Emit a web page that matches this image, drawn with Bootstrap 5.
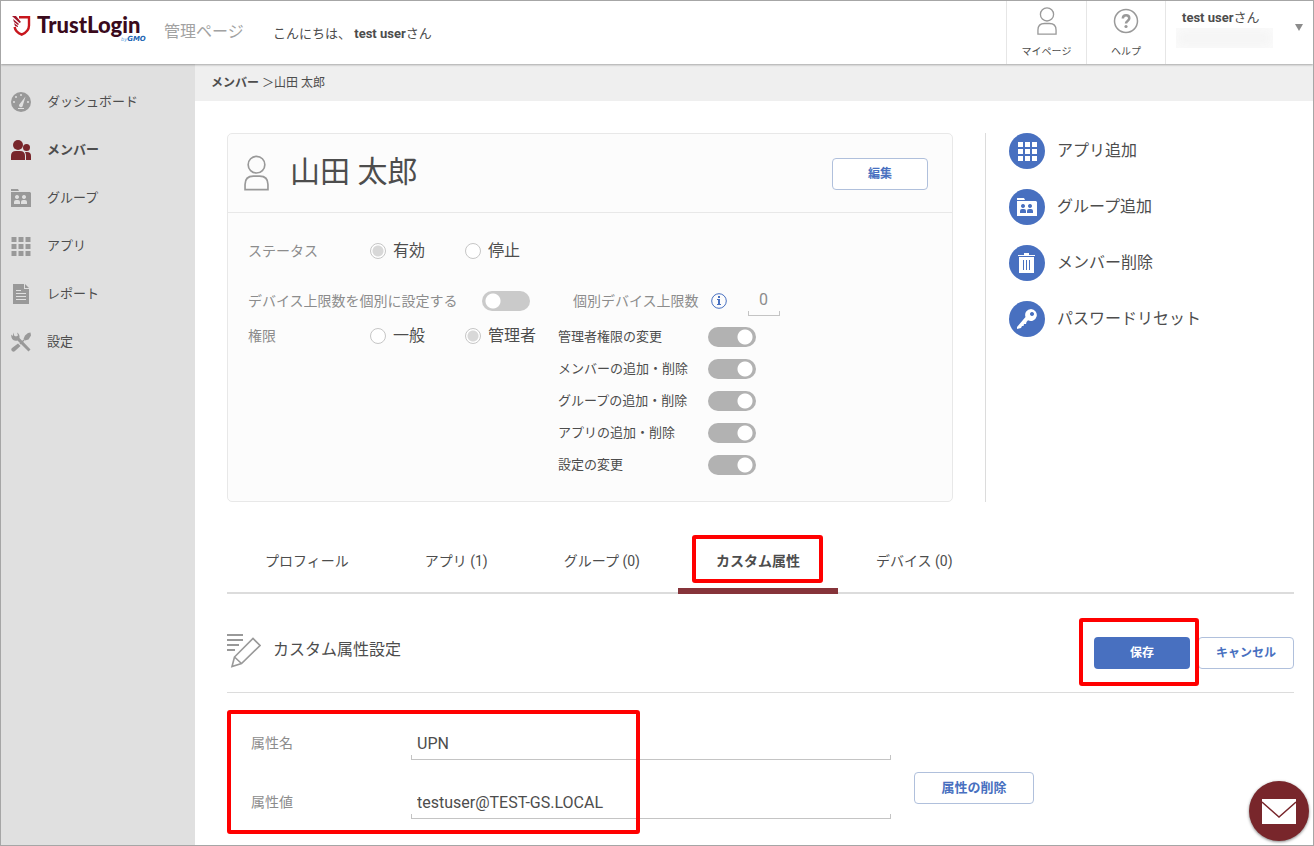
<!DOCTYPE html>
<html lang="ja">
<head>
<meta charset="utf-8">
<meta name="viewport" content="width=device-width, initial-scale=1">
<title>TrustLogin 管理ページ</title>
<link href="https://cdn.jsdelivr.net/npm/bootstrap@5.3.0/dist/css/bootstrap.min.css" rel="stylesheet">
<style>
  :root { --ink:#4d4d4d; --soft:#8c8c8c; --blue:#4870c0; --wine:#78262b; --line:#dcdcdc; }
  body { font-family: Roboto, "Noto Sans CJK JP", sans-serif; font-size: 14px; line-height: 20px; color: var(--ink); background: #fff; min-height: 100vh; border: 1px solid #a6a6a6; display: flex; flex-direction: column; }
  svg { display: block; flex: none; }
  a { color: inherit; text-decoration: none; }

  .topbar { height: 63px; box-shadow: 0 1px 2px rgba(0,0,0,.3); position: relative; z-index: 2; }
  .logo { padding: 14px 0 0 10px; width: 163px; gap: 6px; }
  .logo-name { font: 900 22px/20px Lato, sans-serif; color: #3a0a1c; }
  .logo-by { font: italic 700 7px/8px "DejaVu Sans", sans-serif; color: #1c66b4; padding-left: 84px; }
  .logo-by i { font-size: 5px; font-weight: 400; color: #5fa3dc; }
  .site-name { font-size: 16px; line-height: 24px; color: #a2a2a2; width: 109px; padding-top: 19px; }
  .hello { font-size: 13px; padding-top: 23px; }
  .top-item { width: 80px; border-left: 1px solid #e6e6e6; font-size: 10px; line-height: 12px; padding: 6px 0; }
  .top-item + .top-item { width: 79px; }
  .account { width: 148px; border-left: 1px solid #e6e6e6; padding: 7px 10px 0; font-size: 13px; }
  .account-name { padding-left: 6px; }
  .account-mail { width: 97px; height: 20px; background: #f5f5f5; box-shadow: inset 0 0 8px 3px #fafafa; }
  .account-arrow { width: 8px; height: 7px; background: #8c8c8c; clip-path: polygon(0 0, 100% 0, 50% 100%); margin-top: 16px; }

  .sidebar { width: 194px; flex: none; background: #e0e0e0; padding-top: 14px; }
  .sidebar .nav-link { height: 48px; padding: 0 0 0 9px; gap: 15px; font-size: 13px; color: var(--ink); display: flex; align-items: center; }
  .sidebar .nav-link svg { fill: #999; width: 22px; }
  .sidebar .active { font-weight: 700; }
  .sidebar .active svg { fill: var(--wine); }

  .crumbs { background: #efefef; height: 37px; font-size: 12px; padding: 0 16px; }
  .content { padding: 32px 19px 11px 32px; }

  .member { background: #fcfcfc; border: 1px solid #e8e8e8; border-radius: 5px; margin-right: 32px; }
  .member-head { height: 79px; border-bottom: 1px solid #e8e8e8; padding: 2px 24px 0 16px; }
  .member-head svg { margin-bottom: 2px; }
  .member-head h1 { font-size: 30px; line-height: 40px; font-weight: 400; margin: 0 0 4px 21px; }
  .member-body { padding: 28px 20px 26px; }
  .caption-col { width: 122px; flex: none; color: var(--soft); }
  .choice-group { width: 188px; flex: none; }
  .choice { width: 95px; flex: none; font-size: 16px; gap: 7px; display: flex; align-items: center; white-space: nowrap; }
  .choice input { appearance: none; width: 16px; height: 16px; flex: none; margin: 0; border: 1px solid #c6c6c6; border-radius: 50%; background: #fff; }
  .choice input:checked { background: radial-gradient(circle, #d8d8d8 5px, #fff 6px); }
  .toggle.form-check-input { width: 48px; height: 20px; flex: none; margin: 0; border: 0; border-radius: 10px; opacity: 1; float: none; background: #cacaca radial-gradient(circle at 11px 10px, #fff 7px, transparent 8px); }
  .toggle.form-check-input:checked { background: #b2b2b2 radial-gradient(circle at 37px 10px, #fff 7px, transparent 8px); }
  .device-row { margin: 30px 0 15px; }
  .device-label { width: 234px; flex: none; color: var(--soft); }
  .limit-label { color: var(--soft); margin: 0 12px 0 43px; white-space: nowrap; }
  .rights { font-size: 13px; gap: 12px; padding-top: 1px; }
  .rights label { width: 150px; }

  .line-input { border: 0; border-radius: 0; outline: 0; color: var(--ink); font-size: 16px; line-height: 24px; height: 34px; padding: 0 6px;
    background: linear-gradient(#c4c4c4,#c4c4c4) left bottom/100% 1px no-repeat, linear-gradient(#c4c4c4,#c4c4c4) left bottom/1px 5px no-repeat, linear-gradient(#c4c4c4,#c4c4c4) right bottom/1px 5px no-repeat; }
  .limit { width: 32px; text-align: center; padding: 0; color: var(--soft); margin: -9px 0 -5px 21px; }

  .actions { width: 309px; flex: none; border-left: 1px solid var(--line); padding-left: 23px; gap: 20px; font-size: 16px; }
  .action { gap: 12px; }
  .action-icon { width: 36px; height: 36px; border-radius: 50%; background: var(--blue); display: grid; place-items: center; fill: #fff; }

  .member-tabs { border-bottom: 2px solid var(--line); margin-top: 33px; }
  .member-tabs .nav-link { padding: 16px 38px; height: 57px; color: var(--ink); border-radius: 0; position: relative; white-space: nowrap; }
  .member-tabs .active { font-weight: 700; }
  .member-tabs .active::before { content: ""; position: absolute; inset: auto 0 -2px; height: 6px; background: #86343a; }
  .frame-red { position: absolute; border: 4px solid #f00; border-radius: 3px; pointer-events: none; }
  .frame-tab { inset: 0 15px 9px 14px; }
  .frame-save { inset: -19px -9px -17px -15px; z-index: 1; }
  .frame-fields { left: 0; top: 0; bottom: 0; width: 413px; }

  .section-head { border-bottom: 1px solid var(--line); padding: 39px 0 23px; gap: 12px; }
  .section-head h2 { font-size: 16px; line-height: 24px; font-weight: 400; margin: 5px 0 0; }
  .section-buttons { margin-top: 4px; }
  .btn-line, .btn-fill { font-size: 12px; line-height: 18px; font-weight: 700; width: 96px; height: 32px; padding: 0; border-radius: 4px; }
  .btn-line { color: var(--blue); background: #fff; border: 1px solid #b0c0dc; }
  .btn-fill { color: #fff; background: var(--blue); border: 0; }
  .btn-wide { width: 120px; font-size: 13px; margin-top: 31px; }
  .attributes { margin-top: 17px; gap: 23px; }
  .fields { width: 664px; padding: 16px 0 15px 24px; gap: 25px; }
  .fields label { width: 160px; flex: none; color: var(--soft); }
  .mail-button { position: fixed; right: 5px; bottom: 5px; width: 60px; height: 60px; padding: 0; border: 0; border-radius: 50%; background: var(--wine); box-shadow: 0 1px 3px rgba(0,0,0,.5); display: grid; place-items: center; z-index: 3; }
</style>
</head>
<body>
<svg width="0" height="0" class="position-absolute" aria-hidden="true">
  <symbol id="i-grid" viewBox="0 0 19 19"><path d="M0 0h5v5H0zM7 0h5v5H7zM14 0h5v5h-5zM0 7h5v5H0zM7 7h5v5H7zM14 7h5v5h-5zM0 14h5v5H0zM7 14h5v5H7zM14 14h5v5h-5z"/></symbol>
  <symbol id="i-folder" viewBox="0 0 20 18"><path fill-rule="evenodd" d="M0 0h7l1 2H0zM0 3h19l1 1v14H0zM6 6a2 2 0 1 0 .01 0zM13 6a2 2 0 1 0 .01 0zM3 15h6v-2q0-2-2-2H5q-2 0-2 2zM10 15h6v-2q0-2-2-2h-2q-2 0-2 2z"/></symbol>
  <symbol id="i-person" viewBox="0 0 24 34"><g fill="none" stroke="#999" stroke-width="1.600"><circle cx="12" cy="9" r="8"/><path d="M1 33v-5q0-8 8-8h6q8 0 8 8v5z"/></g></symbol>
</svg>

<header class="topbar d-flex bg-white">
  <a href="#" class="logo d-flex flex-shrink-0" aria-label="TrustLogin by GMO">
    <svg width="20" height="22" viewBox="0 0 20 22"><path d="M8 2.200h10v8.300q0 6-7.300 9.200Q4.500 17.200 3.600 12" fill="none" stroke="#c8161d" stroke-width="2.400"/><path d="M1 1h4l5 6-1.500 1zM2 4l6 5-1 1-4-3zM3 8l4 3v1l-3-1z" fill="#a3172a"/></svg>
    <span class="flex-shrink-0"><span class="logo-name d-block">TrustLogin</span><span class="logo-by d-block"><i>by</i>GMO</span></span>
  </a>
  <span class="site-name">管理ページ</span>
  <span class="hello">こんにちは、 <b>test user</b>さん</span>
  <nav class="d-flex ms-auto">
    <a href="#" class="top-item d-flex flex-column align-items-center justify-content-between"><svg width="20" height="28"><use href="#i-person"/></svg>マイページ</a>
    <a href="#" class="top-item d-flex flex-column align-items-center justify-content-between"><svg width="26" height="28" viewBox="0 0 26 28"><circle cx="13" cy="14" r="11.500" fill="none" stroke="#999" stroke-width="1.500"/><path d="M9.800 11.500Q10 8.300 13.100 8.300t3.200 3q0 1.500-1.700 2.700T13 16.500" fill="none" stroke="#999" stroke-width="2.500"/><circle cx="13" cy="19.500" r="1.600" fill="#999"/></svg>ヘルプ</a>
    <a href="#" class="account d-flex justify-content-between"><span><span class="account-name"><b>test user</b>さん</span><span class="account-mail d-block"></span></span><span class="account-arrow"></span></a>
  </nav>
</header>

<div class="d-flex flex-grow-1">
  <nav class="sidebar nav flex-column flex-nowrap">
    <a href="#" class="nav-link"><svg height="20" viewBox="0 0 22 20"><circle cx="11" cy="10" r="10"/><g fill="#e0e0e0"><path d="M15.500 4.500l-2.700 9a1.900 1.900 0 1 1-3.100-1.600zM8 16h6v1H8z"/><circle cx="11" cy="3" r="1"/><circle cx="6" cy="5" r="1"/><circle cx="4" cy="10" r="1"/><circle cx="18" cy="10" r="1"/></g></svg>ダッシュボード</a>
    <a href="#" class="nav-link active"><svg height="20" viewBox="0 0 22 20"><circle cx="8" cy="5" r="5"/><path d="M1 20v-4q0-5 5-5h4q5 0 5 5v4z"/><circle cx="16.500" cy="7.500" r="3.500"/><path d="M16 20v-4q0-2-1-4h2q4 0 4 4v4z"/></svg>メンバー</a>
    <a href="#" class="nav-link"><svg height="18"><use href="#i-folder"/></svg>グループ</a>
    <a href="#" class="nav-link"><svg height="19"><use href="#i-grid"/></svg>アプリ</a>
    <a href="#" class="nav-link"><svg height="20" viewBox="0 0 22 20"><path fill-rule="evenodd" d="M3 0h11v5h5v15H3zM15 0l4 4h-4zM6 6v1h5V6zM6 9v1h10V9zM6 12v1h10v-1zM6 15v1h10v-1z"/></svg>レポート</a>
    <a href="#" class="nav-link"><svg height="20" viewBox="0 0 22 20"><path d="M4 0.500L4 3.500 6 4.500 8 3.500 7 0.500Q10 2 9.500 6L20.500 17.500 18.500 19.500 7.500 8.500Q3 9.500 1.500 5.500L1 2.500 2.500 4z"/><path d="M20.500 0.500L21 3.500 18.500 7.500 15 8.500 13.500 7 15 3.500 18 1zM13.500 7.500l1 1-4 4-1-1zM8 11.500l2.500 2.500-5.500 5q-1.500 1.500-3 0t0-3z"/></svg>設定</a>
  </nav>

  <main class="flex-grow-1">
    <div class="crumbs d-flex align-items-center"><span><a href="#"><b>メンバー</b></a> ＞山田 太郎</span></div>
    <div class="content">
      <div class="d-flex">
        <section class="member flex-grow-1">
          <div class="member-head d-flex align-items-center">
            <svg width="25" height="36"><use href="#i-person"/></svg>
            <h1>山田 太郎</h1>
            <button type="button" class="btn btn-line ms-auto">編集</button>
          </div>
          <div class="member-body">
            <div class="d-flex align-items-center">
              <span class="caption-col">ステータス</span>
              <label class="choice"><input type="radio" name="status" checked>有効</label>
              <label class="choice"><input type="radio" name="status">停止</label>
            </div>
            <div class="device-row d-flex align-items-center">
              <label for="device-own" class="device-label">デバイス上限数を個別に設定する</label>
              <input id="device-own" type="checkbox" role="switch" class="form-check-input toggle" disabled>
              <label for="device-limit" class="limit-label">個別デバイス上限数</label>
              <svg width="16" height="16" viewBox="0 0 16 16" fill="#4870c0"><circle cx="8" cy="8" r="7.300" fill="none" stroke="#4870c0"/><path d="M7 3h2v2H7zM6 6h3v5h1v1H6v-1h1V7H6z"/></svg>
              <input id="device-limit" type="text" class="line-input limit" value="0">
            </div>
            <div class="d-flex">
              <span class="caption-col">権限</span>
              <div class="choice-group d-flex align-items-start">
                <label class="choice"><input type="radio" name="role">一般</label>
                <label class="choice"><input type="radio" name="role" checked>管理者</label>
              </div>
              <div class="rights d-flex flex-column">
                <div class="d-flex"><label for="r1">管理者権限の変更</label><input id="r1" type="checkbox" role="switch" class="form-check-input toggle" checked disabled></div>
                <div class="d-flex"><label for="r2">メンバーの追加・削除</label><input id="r2" type="checkbox" role="switch" class="form-check-input toggle" checked disabled></div>
                <div class="d-flex"><label for="r3">グループの追加・削除</label><input id="r3" type="checkbox" role="switch" class="form-check-input toggle" checked disabled></div>
                <div class="d-flex"><label for="r4">アプリの追加・削除</label><input id="r4" type="checkbox" role="switch" class="form-check-input toggle" checked disabled></div>
                <div class="d-flex"><label for="r5">設定の変更</label><input id="r5" type="checkbox" role="switch" class="form-check-input toggle" checked disabled></div>
              </div>
            </div>
          </div>
        </section>

        <nav class="actions d-flex flex-column">
          <a href="#" class="action d-flex align-items-center"><span class="action-icon"><svg width="19" height="19"><use href="#i-grid"/></svg></span>アプリ追加</a>
          <a href="#" class="action d-flex align-items-center"><span class="action-icon"><svg width="20" height="18"><use href="#i-folder"/></svg></span>グループ追加</a>
          <a href="#" class="action d-flex align-items-center"><span class="action-icon"><svg width="18" height="20" viewBox="0 0 18 20"><path fill-rule="evenodd" d="M6 0h5v2h6v1H0V2h6zM1 4h15v16H1zM5 7v10h1V7zM8 7v10h1V7zM11 7v10h1V7z"/></svg></span>メンバー削除</a>
          <a href="#" class="action d-flex align-items-center"><span class="action-icon"><svg width="20" height="20" viewBox="0 0 20 20"><path fill-rule="evenodd" d="M14 0a6 6 0 1 1-3 11.300L9.500 13 9 15H7l-.5 2H5l-1 2-4 1v-2l8.500-10A6 6 0 0 1 14 0zM15 3a2 2 0 1 0 .01 0z"/></svg></span>パスワードリセット</a>
        </nav>
      </div>

      <ul class="nav member-tabs flex-nowrap">
        <li class="nav-item"><a href="#" class="nav-link">プロフィール</a></li>
        <li class="nav-item"><a href="#" class="nav-link">アプリ (1)</a></li>
        <li class="nav-item"><a href="#" class="nav-link">グループ (0)</a></li>
        <li class="nav-item"><a href="#" class="nav-link active" aria-current="page">カスタム属性<span class="frame-red frame-tab"></span></a></li>
        <li class="nav-item"><a href="#" class="nav-link">デバイス (0)</a></li>
      </ul>

      <form>
        <div class="section-head d-flex align-items-start">
          <svg width="34" height="35" viewBox="0 0 34 35" fill="none" stroke="#999"><path d="M0 2h16M0 7h16M0 12h12M0 17h8" stroke-width="2"/><path d="M7.500 24L26 5.500l7 7L14.500 30.500 5 33.500zM7.500 24l7 6.500" stroke-width="1.600"/></svg>
          <h2>カスタム属性設定</h2>
          <div class="section-buttons d-flex gap-2 ms-auto">
            <span class="position-relative"><button type="submit" class="btn btn-fill d-block">保存</button><span class="frame-red frame-save"></span></span>
            <button type="button" class="btn btn-line">キャンセル</button>
          </div>
        </div>
        <div class="attributes d-flex align-items-center">
          <div class="fields d-flex flex-column position-relative">
            <div class="d-flex align-items-center"><label for="attr-name">属性名</label><input id="attr-name" type="text" class="line-input flex-grow-1" value="UPN"></div>
            <div class="d-flex align-items-center"><label for="attr-value">属性値</label><input id="attr-value" type="text" class="line-input flex-grow-1" value="testuser@TEST-GS.LOCAL"></div>
            <span class="frame-red frame-fields"></span>
          </div>
          <button type="button" class="btn btn-line btn-wide">属性の削除</button>
        </div>
      </form>
    </div>
  </main>
</div>

<button type="button" class="mail-button" aria-label="お問い合わせ"><svg width="34" height="25" viewBox="0 0 34 25"><path d="M0 0h34v25H0z" fill="#fff"/><path d="M0 3l17 15L34 3" fill="none" stroke="#78262b" stroke-width="1.400"/></svg></button>
<script src="https://cdn.jsdelivr.net/npm/bootstrap@5.3.0/dist/js/bootstrap.bundle.min.js"></script>
</body>
</html>
